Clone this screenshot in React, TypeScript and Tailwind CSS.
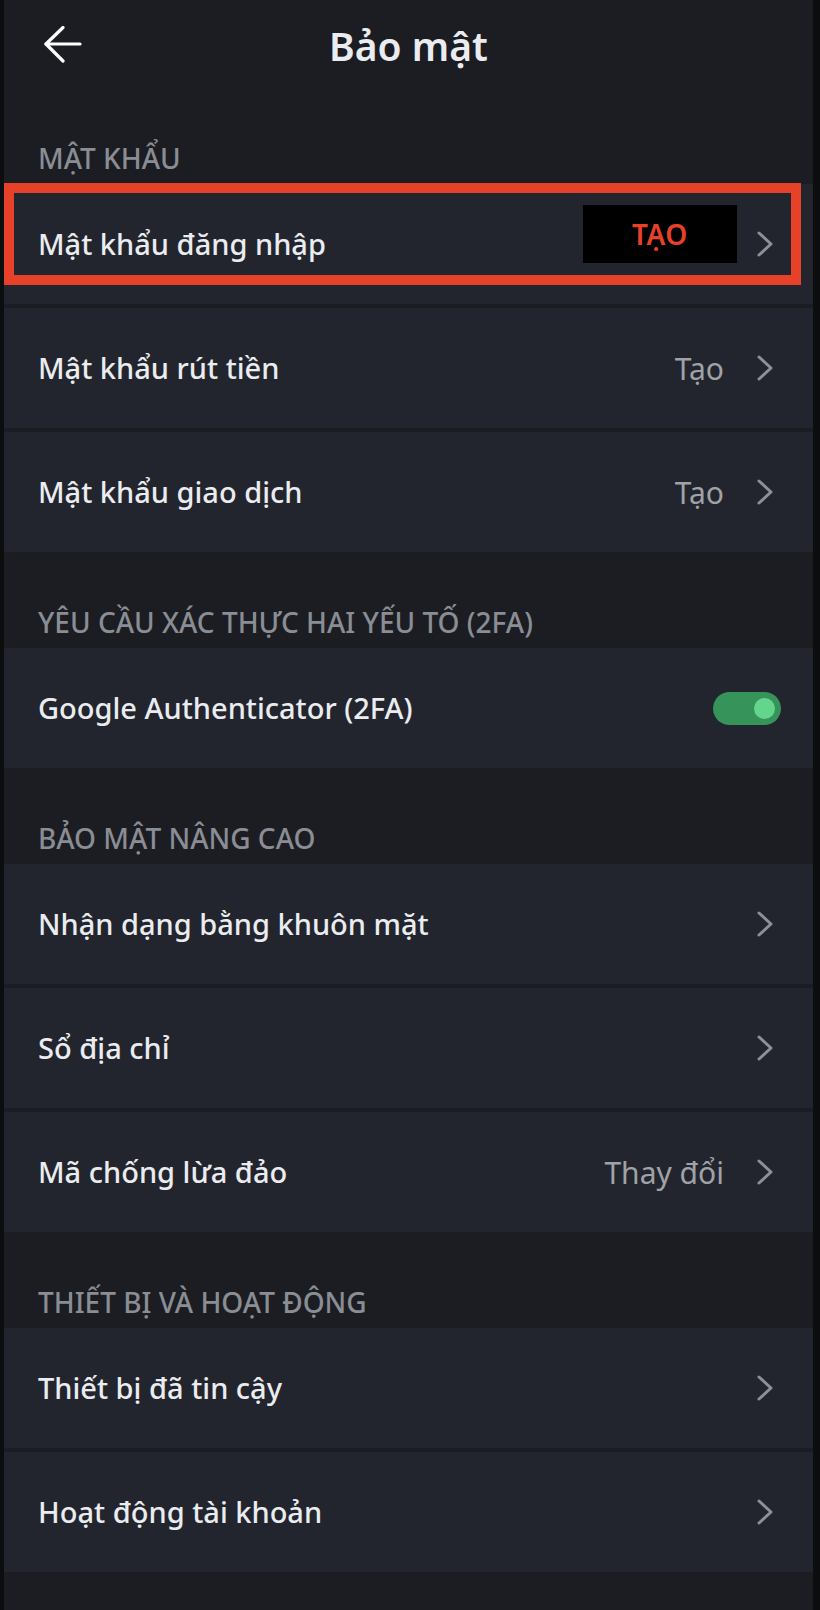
import type { ReactNode } from 'react';

type Row = {
  label: string;
  value?: string;
  toggle?: boolean;
};

const sections: { title: string; rows: Row[] }[] = [
  {
    title: 'Mật khẩu',
    rows: [
      { label: 'Mật khẩu đăng nhập' },
      { label: 'Mật khẩu rút tiền', value: 'Tạo' },
      { label: 'Mật khẩu giao dịch', value: 'Tạo' },
    ],
  },
  {
    title: 'Yêu cầu xác thực hai yếu tố (2FA)',
    rows: [{ label: 'Google Authenticator (2FA)', toggle: true }],
  },
  {
    title: 'Bảo mật nâng cao',
    rows: [
      { label: 'Nhận dạng bằng khuôn mặt' },
      { label: 'Sổ địa chỉ' },
      { label: 'Mã chống lừa đảo', value: 'Thay đổi' },
    ],
  },
  {
    title: 'Thiết bị và hoạt động',
    rows: [{ label: 'Thiết bị đã tin cậy' }, { label: 'Hoạt động tài khoản' }],
  },
];

function Chevron() {
  return (
    <svg width="16" height="26" viewBox="0 0 16 26" fill="none">
      <polyline
        points="2,2 14,13 2,24"
        stroke="#8e9197"
        strokeWidth="3"
        strokeLinecap="round"
        strokeLinejoin="round"
      />
    </svg>
  );
}

function BackArrow() {
  return (
    <svg width="38" height="38" viewBox="0 0 38 38" fill="none">
      <line x1="2" y1="18" x2="36" y2="18" stroke="#ffffff" strokeWidth="3.2" strokeLinecap="round" />
      <polyline
        points="19,1.5 2,18 19,35"
        stroke="#ffffff"
        strokeWidth="3.2"
        strokeLinecap="round"
        strokeLinejoin="round"
      />
    </svg>
  );
}

function Toggle() {
  return (
    <div className="flex h-[33px] w-[68px] items-center justify-end rounded-full bg-[#36935a] pr-[6px]">
      <div className="h-[21px] w-[21px] rounded-full bg-[#63d58d]" />
    </div>
  );
}

function SettingRow({ row, children }: { row: Row; children?: ReactNode }) {
  return (
    <div
      className={`relative flex h-[120px] items-center justify-between bg-[#22252d] pl-[34px] ${
        row.toggle ? 'pr-[32px]' : 'pr-[40px]'
      }`}
    >
      <span className="text-[29px] font-medium text-[#eaecef]">{row.label}</span>
      {row.toggle ? (
        <Toggle />
      ) : (
        <div className="flex items-center gap-[33px]">
          {row.value && <span className="text-[30px] text-[#9fa2a7]">{row.value}</span>}
          <Chevron />
        </div>
      )}
      {children}
    </div>
  );
}

export default function App() {
  return (
    <div
      className="flex min-h-[1610px] w-[820px] bg-[#0c0d0f] pl-[4px] pr-[7px]"
      style={{ fontFamily: '"Noto Sans", "Open Sans", sans-serif' }}
    >
      <div className="flex flex-1 flex-col bg-[#1b1d23] pb-[38px]">
        <div className="grid h-[88px] grid-cols-[1fr_auto_1fr] items-center pt-[2px]">
          <div className="pl-[40px]">
            <BackArrow />
          </div>
          <h1 className="text-[39px] font-semibold leading-none text-[#eaecef]">Bảo mật</h1>
          <div />
        </div>

        {sections.map((section, si) => (
          <div key={section.title}>
            <div className="flex h-[96px] items-end px-[34px] pb-[12px]">
              <span className="text-[28px] font-medium uppercase leading-[28px] text-[#8a8d93]">
                {section.title}
              </span>
            </div>
            <div className="flex flex-col gap-[4px]">
              {section.rows.map((row, ri) => (
                <SettingRow key={row.label} row={row}>
                  {si === 0 && ri === 0 && (
                    <>
                      {/* annotation overlay from the screenshot */}
                      <div className="absolute left-0 top-[-1px] h-[102px] w-[797px] border-[10px] border-[#e8412a]" />
                      <div className="absolute left-[579px] top-[21px] flex h-[58px] w-[154px] items-center justify-center bg-black">
                        <span className="text-[28px] font-semibold leading-none tracking-[0.5px] text-[#e8412a]">
                          TẠO
                        </span>
                      </div>
                    </>
                  )}
                </SettingRow>
              ))}
            </div>
          </div>
        ))}
      </div>
    </div>
  );
}
